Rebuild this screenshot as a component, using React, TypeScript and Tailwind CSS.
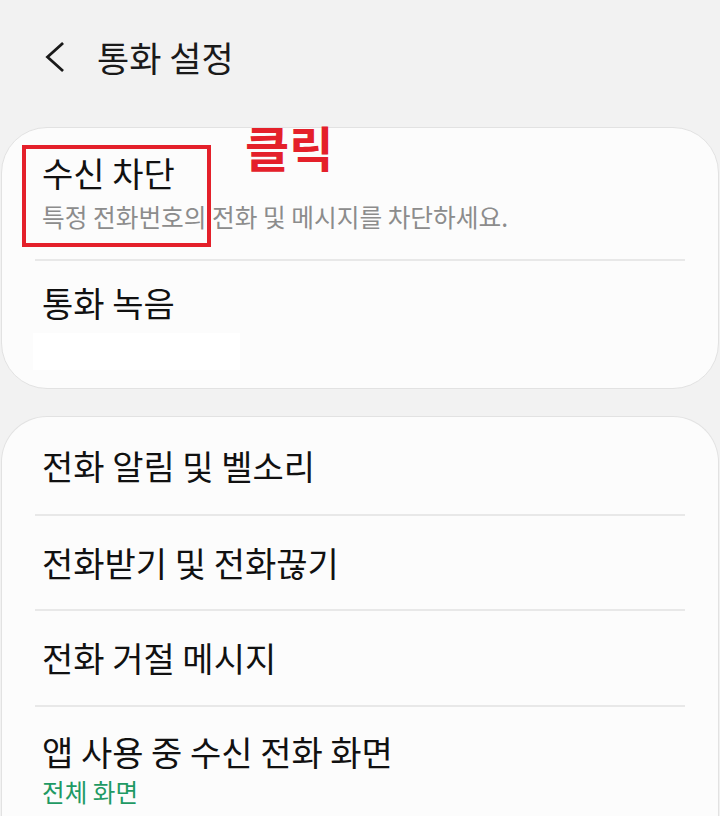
import React from 'react';

const font = { fontFamily: '"Noto Sans CJK KR", "Noto Sans", sans-serif' };

function Divider() {
  return <div className="mx-[33px] h-[2px] bg-[#e8e8e8]" />;
}

function Row({ title, height }: { title: string; height: string }) {
  return (
    <div className={`flex items-center px-[40px] ${height}`}>
      <span className="text-[34px] leading-[40px] text-[#111111]">{title}</span>
    </div>
  );
}

export default function App() {
  return (
    <div className="min-h-[816px] w-[720px] overflow-hidden bg-[#f2f2f2]" style={font}>
      {/* header */}
      <div className="flex h-[127px] items-start pt-[36px]">
        <div className="flex h-[42px] items-center pl-[44px]">
          <svg width="22" height="30" viewBox="0 0 22 30" fill="none">
            <path d="M18 2 L3.5 15 L18 28" stroke="#1a1a1a" strokeWidth="2.8" strokeLinecap="square" />
          </svg>
        </div>
        <h1 className="ml-[31px] text-[35px] leading-[42px] text-[#1a1a1a]">통화 설정</h1>
      </div>

      {/* card 1 */}
      <div className="relative mx-[1px] rounded-[46px] border border-[#e2e2e2] bg-[#fcfcfc]">
        <div className="flex h-[131px] flex-col px-[40px] pt-[25px]">
          <span className="text-[34px] leading-[40px] text-[#111111]">수신 차단</span>
          <span className="mt-[8px] text-[24.7px] leading-[30px] text-[#8c8c8c]">
            특정 전화번호의 전화 및 메시지를 차단하세요.
          </span>
        </div>
        <Divider />
        <div className="flex h-[127px] flex-col px-[40px] pt-[22px]">
          <span className="text-[34px] leading-[40px] text-[#111111]">통화 녹음</span>
          <div className="ml-[-9px] mt-[10px] h-[37px] w-[207px] bg-white" />
        </div>

        {/* annotation */}
        <div className="absolute left-[20px] top-[17px] h-[102px] w-[189px] border-[4px] border-[#e4202a]" />
        <div className="absolute left-[243px] top-[-10px] text-[48px] font-bold leading-[56px] text-[#e4202a]">
          클릭
        </div>
      </div>

      {/* card 2 */}
      <div className="mx-[1px] mt-[27px] rounded-t-[46px] border border-b-0 border-[#e2e2e2] bg-[#fcfcfc]">
        <Row title="전화 알림 및 벨소리" height="h-[97px]" />
        <Divider />
        <Row title="전화받기 및 전화끊기" height="h-[93px]" />
        <Divider />
        <Row title="전화 거절 메시지" height="h-[94px]" />
        <Divider />
        <div className="flex h-[120px] flex-col px-[40px] pt-[25px]">
          <span className="text-[34px] leading-[40px] text-[#111111]">앱 사용 중 수신 전화 화면</span>
          <span className="mt-[4px] text-[24.6px] leading-[30px] text-[#1f9a64]">전체 화면</span>
        </div>
      </div>
    </div>
  );
}
